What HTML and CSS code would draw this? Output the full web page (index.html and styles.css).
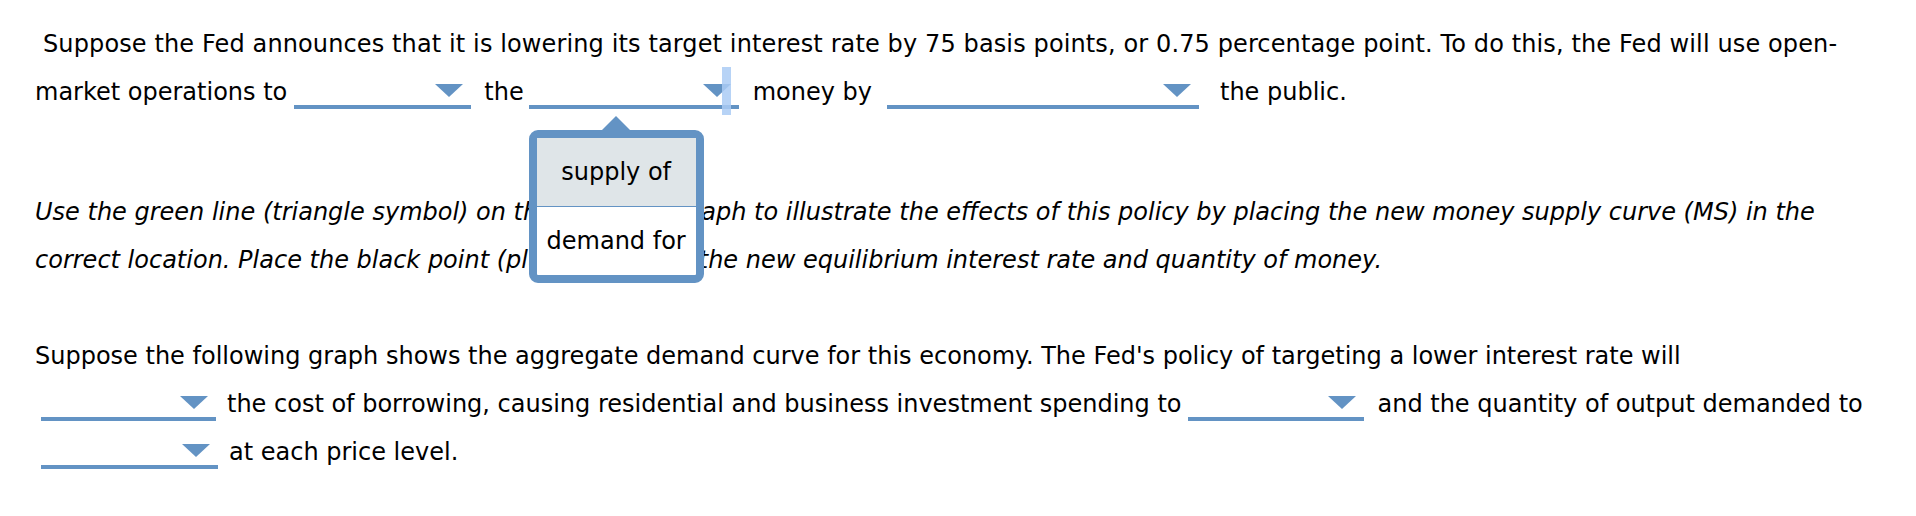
FILE: index.html
```html
<!DOCTYPE html>
<html>
<head>
<meta charset="utf-8">
<link rel="stylesheet" href="styles.css">
</head>
<body>
<div class="page">
  <p class="para p1"><span class="indent">Suppose the Fed announces that it is lowering its target interest rate by 75 basis points, or 0.75 percentage point. To do this, the Fed will use open-</span><br>market operations to<span class="dd w177 d1"><span class="arrow"></span></span>the<span class="dd w210 d2"><span class="arrow"></span><span class="caret"></span><span class="menu"><span class="opt sel">supply of</span><span class="opt">demand for</span></span></span>money by<span class="dd w312 d3"><span class="arrow"></span></span>the public.</p>

  <p class="para p2 ital">Use the green line (triangle symbol) on the following graph to illustrate the effects of this policy by placing the new money supply curve (MS) in the<br>correct location. Place the black point (plus symbol) at the new equilibrium interest rate and quantity of money.</p>

  <p class="para p3">Suppose the following graph shows the aggregate demand curve for this economy. The Fed's policy of targeting a lower interest rate will<br><span class="dd w174 first"><span class="arrow"></span></span>the cost of borrowing, causing residential and business investment spending to<span class="dd w176 d4"><span class="arrow"></span></span>and the quantity of output demanded to<br><span class="dd w177 first"><span class="arrow"></span></span>at each price level.</p>
</div>
</body>
</html>
```

FILE: styles.css
```css
html, body {
  margin: 0;
  padding: 0;
  background: #ffffff;
}

body {
  font-family: "DejaVu Sans", Verdana, sans-serif;
  font-size: 24px;
  color: #000000;
}

.page {
  padding: 20px 0 0 35px;
}

.para {
  margin: 0;
  line-height: 48px;
  white-space: nowrap;
}

.indent {
  padding-left: 8px;
  letter-spacing: 0.12px;
}

.p2 {
  margin-top: 72px;
}

.p3 {
  margin-top: 48px;
}

.ital {
  font-style: italic;
}

.dd {
  position: relative;
  display: inline-flex;
  justify-content: flex-end;
  align-items: flex-start;
  box-sizing: border-box;
  height: 26px;
  border-bottom: 4px solid #6393c4;
  vertical-align: top;
  margin: 15px 13px 0 10px;
}

.dd.d1 {
  margin-left: 7px;
  margin-right: 13px;
}

.dd.d2 {
  margin-left: 5px;
  margin-right: 14px;
}

.dd.d3 {
  margin-left: 15px;
  margin-right: 21px;
}

.dd.d4 {
  margin-left: 7px;
  margin-right: 13px;
}

.dd.first {
  margin-left: 6px;
  margin-right: 11px;
}

.w174 { width: 175px; }
.w176 { width: 176px; }
.w177 { width: 177px; }
.w210 { width: 210px; }
.w312 { width: 312px; }

.arrow {
  width: 0;
  height: 0;
  margin: 1px 8px 0 0;
  border-left: 14px solid transparent;
  border-right: 14px solid transparent;
  border-top: 13px solid #6393c4;
}

.caret {
  position: absolute;
  left: 193px;
  top: -16px;
  width: 9px;
  height: 48px;
  background: rgba(170, 203, 245, 0.85);
}

.menu {
  position: absolute;
  left: 0;
  top: 47px;
  width: 175px;
  height: 153px;
  box-sizing: border-box;
  border: 8px solid #6393c4;
  border-radius: 9px;
  background: #ffffff;
  display: flex;
  flex-direction: column;
  z-index: 5;
}

.menu::before {
  content: "";
  position: absolute;
  top: -22px;
  left: 50%;
  margin-left: -14px;
  width: 0;
  height: 0;
  border-left: 14px solid transparent;
  border-right: 14px solid transparent;
  border-bottom: 14px solid #6393c4;
}

.opt {
  flex: 1;
  display: flex;
  align-items: center;
  justify-content: center;
  font-style: normal;
  line-height: 1;
}

.opt.sel {
  background: #dfe5e8;
  border-bottom: 1px solid #6393c4;
}
```
